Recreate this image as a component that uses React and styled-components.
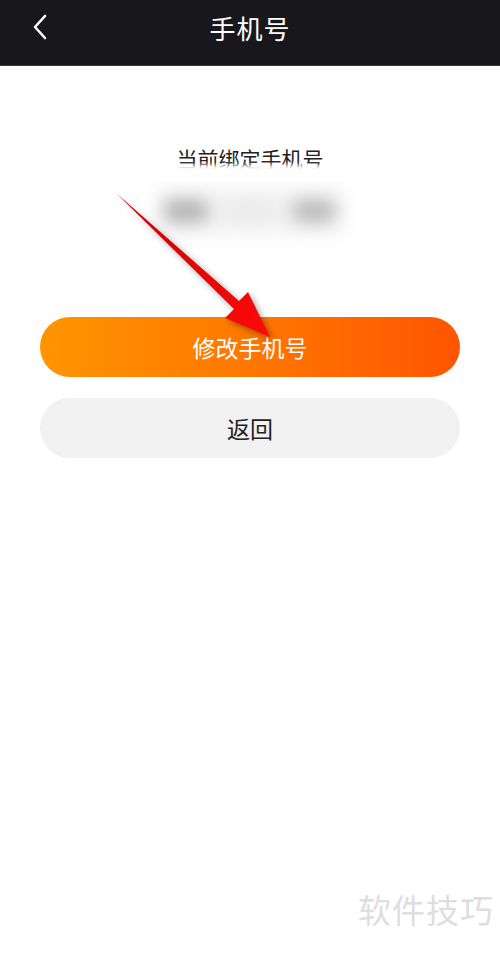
import styled, { createGlobalStyle } from "styled-components"

const Global = createGlobalStyle`
  html, body {
    margin: 0;
    padding: 0;
    background: #fff;
    font-family: "Noto Sans CJK SC", "Noto Sans", sans-serif;
  }
`

const Page = styled.div`
  position: relative;
  width: 500px;
  height: 955px;
  overflow: hidden;
  background: #fff;
`

const NavBar = styled.header`
  height: 65px;
  background: #18171c;
  display: flex;
  align-items: center;
  justify-content: center;
  position: relative;
  border-bottom: 1px solid #3a3a3e;
`

const BackBtn = styled.button`
  position: absolute;
  left: 28px;
  top: 12px;
  width: 24px;
  height: 30px;
  padding: 0;
  border: none;
  background: none;
  display: flex;
  align-items: center;
  justify-content: center;
`

const NavTitle = styled.h1`
  margin: 0 0 10px;
  color: #fff;
  font-size: 26px;
  font-weight: 400;
  letter-spacing: 1px;
`

const Body = styled.main`
  padding: 0 40px;
  display: flex;
  flex-direction: column;
  align-items: center;
`

const Bound = styled.section`
  position: relative;
  margin-top: 78px;
  display: flex;
  flex-direction: column;
  align-items: center;
  gap: 14px;
`

const Label = styled.p`
  margin: 0;
  font-size: 21px;
  line-height: 28px;
  color: #222;
`

// masked phone number, smeared out
const Number = styled.div`
  position: relative;
  width: 186px;
  height: 50px;
  display: flex;
  align-items: center;
  justify-content: space-between;
  padding: 0 6px;
  box-sizing: border-box;
  background: rgba(0, 0, 0, 0.045);
  filter: blur(9px);
`

const Blob = styled.span`
  width: ${(p) => p.$w}px;
  height: 22px;
  border-radius: 11px;
  background: #9c9c9c;
  opacity: ${(p) => p.$o};
`

const Veil = styled.div`
  position: absolute;
  left: -10px;
  right: -10px;
  top: 21px;
  height: 16px;
  background: #fff;
  filter: blur(2px);
`

const Actions = styled.div`
  width: 100%;
  margin-top: 81px;
  display: flex;
  flex-direction: column;
  gap: 21px;
`

const Button = styled.button`
  width: 100%;
  height: 60px;
  border: none;
  border-radius: 30px;
  font-family: inherit;
  font-size: 23px;
  color: ${(p) => (p.$primary ? "#fff" : "#222")};
  background: ${(p) =>
    p.$primary ? "linear-gradient(90deg, #ff9500 0%, #ff7a00 45%, #ff5500 100%)" : "#f1f1f1"};
`

const Pointer = styled.svg`
  position: absolute;
  left: 0;
  top: 0;
  pointer-events: none;
  filter: drop-shadow(3px 3px 3px rgba(0, 0, 0, 0.35));
`

const Mark = styled.div`
  position: absolute;
  right: 6px;
  bottom: 22px;
  font-size: 33px;
  color: #dedede;
  letter-spacing: 1px;
`

export default function App() {
  return (
    <Page>
      <Global />
      <NavBar>
        <BackBtn aria-label="back">
          <svg width="20" height="28" viewBox="0 0 20 28">
            <path d="M15 3 L5 14 L15 25" fill="none" stroke="#fff" strokeWidth="2.6" strokeLinecap="round" strokeLinejoin="round" />
          </svg>
        </BackBtn>
        <NavTitle>手机号</NavTitle>
      </NavBar>

      <Body>
        <Bound>
          <Label>当前绑定手机号</Label>
          <Number>
            <Blob $w={46} $o={0.8} />
            <Blob $w={60} $o={0.12} />
            <Blob $w={46} $o={0.7} />
          </Number>
          <Veil />
        </Bound>

        <Actions>
          <Button $primary>修改手机号</Button>
          <Button>返回</Button>
        </Actions>
      </Body>

      <Pointer width="500" height="400" viewBox="0 0 500 400">
        <defs>
          <linearGradient id="red" x1="0" y1="0" x2="1" y2="1">
            <stop offset="0" stopColor="#c80000" />
            <stop offset="1" stopColor="#ff0a0a" />
          </linearGradient>
        </defs>
        <path d="M116 193 L234 309 L225 318 L270 337 L248 292 L239 301 Z" fill="url(#red)" />
      </Pointer>

      <Mark>软件技巧</Mark>
    </Page>
  )
}
